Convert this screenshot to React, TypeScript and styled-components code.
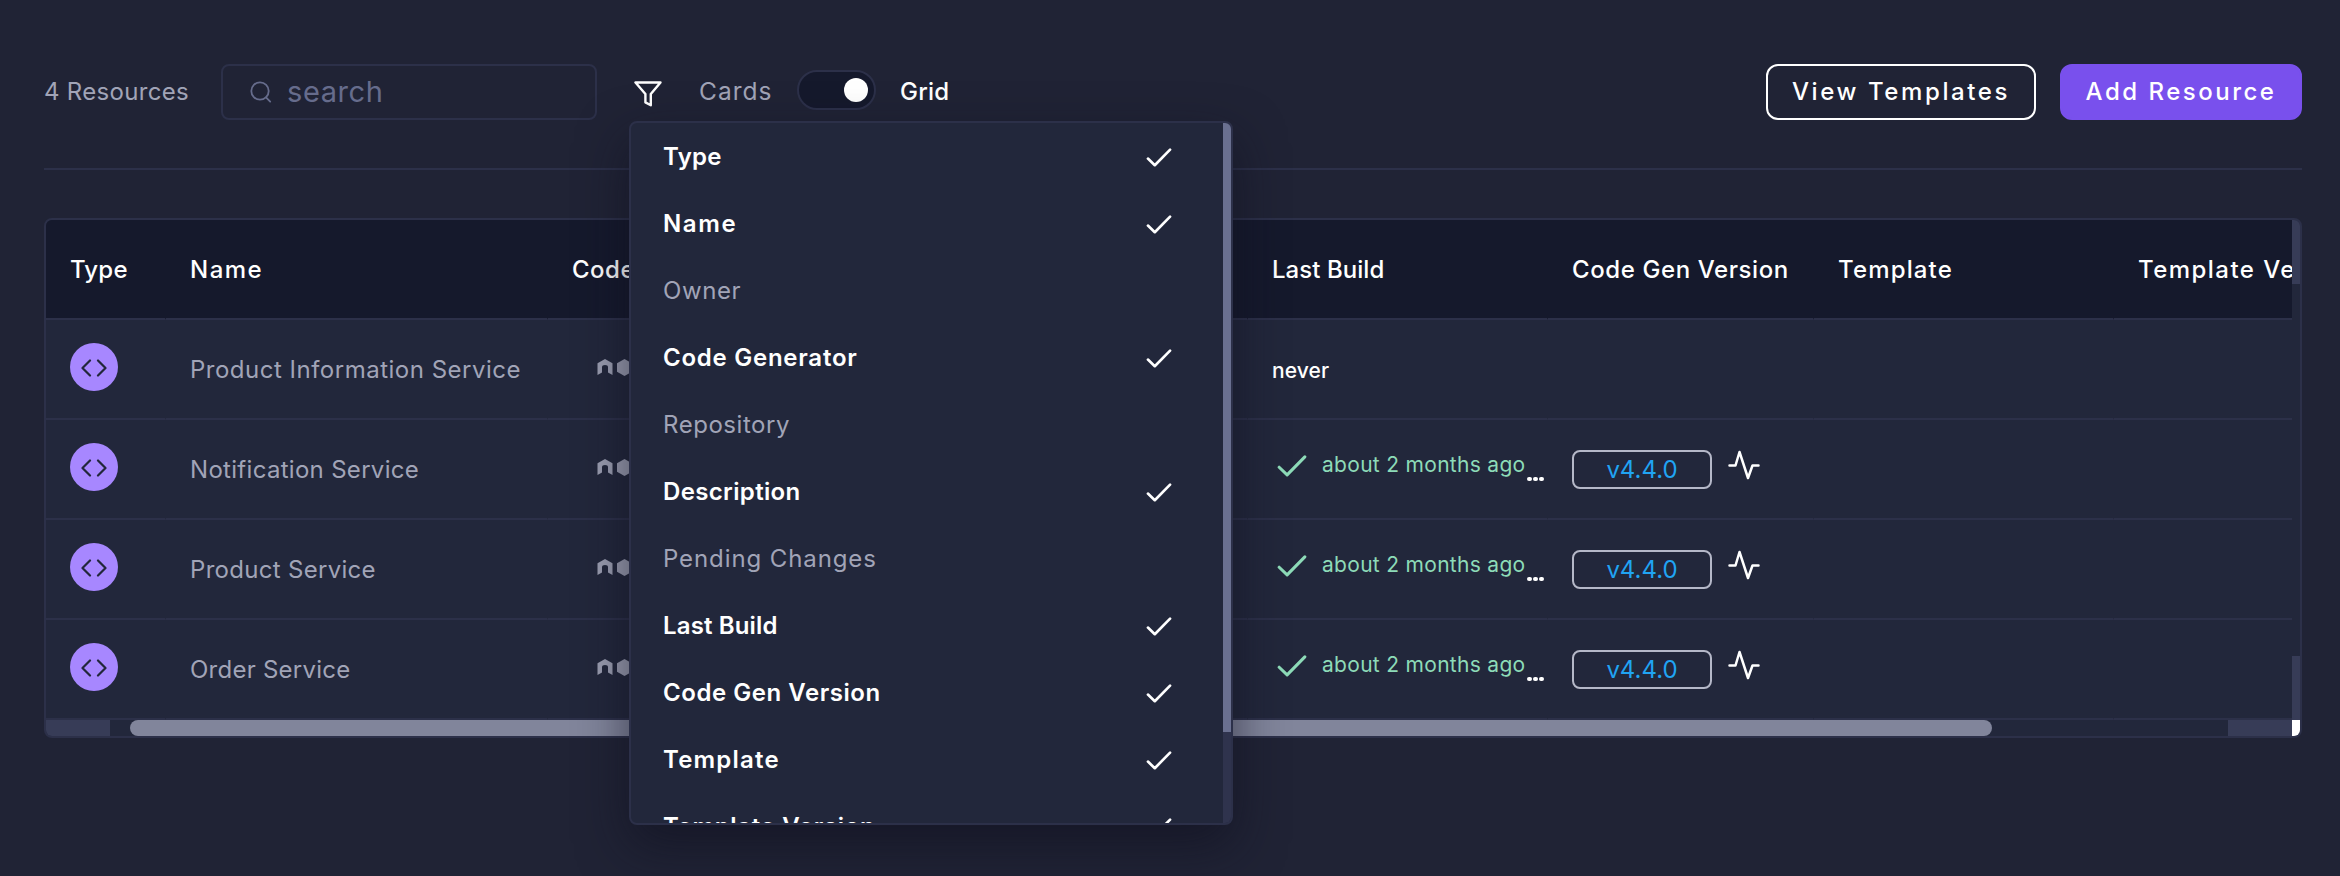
import React from "react";
import styled, { createGlobalStyle } from "styled-components";

const Global = createGlobalStyle`
  * { box-sizing: border-box; }
  body { margin: 0; background: #202335; color: #fff; font-family: Inter, sans-serif; font-size: 24px; }
  button { font: inherit; color: inherit; }
`;

const line = "#2c3049";
const muted = "#a1a4b7";

const Page = styled.main`
  position: relative;
  height: 876px;
  padding: 64px 38px 0 44px;
  overflow: hidden;
`;
const Toolbar = styled.header`
  display: flex;
  align-items: center;
  height: 106px;
  padding-bottom: 48px;
  border-bottom: 2px solid ${line};
`;
const Label = styled.span<{ $color?: string; $size?: number; $track?: number; $weight?: number }>`
  color: ${(p) => p.$color ?? "#fff"};
  font-size: ${(p) => p.$size ?? 24}px;
  letter-spacing: ${(p) => p.$track ?? 0}px;
  font-weight: ${(p) => p.$weight ?? 400};
  line-height: 1;
  white-space: nowrap;
`;
const Count = styled.div`display: flex; width: 177px; flex: none; padding-bottom: 1px;`;
const Search = styled.div`
  display: flex;
  align-items: center;
  gap: 15px;
  width: 376px;
  height: 56px;
  padding: 0 0 1px 27px;
  border: 2px solid ${line};
  border-radius: 8px;
`;
const FilterButton = styled.button`
  display: flex;
  margin: 4px 36px 0 37px;
  padding: 0;
  border: 0;
  background: none;
`;
const CardsSlot = styled.div`display: flex; width: 98px; flex: none; margin-left: 1px; padding-bottom: 1px;`;
const Toggle = styled.div`
  display: flex;
  align-items: center;
  justify-content: flex-end;
  width: 79px;
  height: 40px;
  margin: 0 24px 4px 0;
  padding-right: 6px;
  border: 2px solid ${line};
  border-radius: 20px;
  background: #15192c;
`;
const Knob = styled.span`width: 24px; height: 24px; border-radius: 50%; background: #fff;`;
const Actions = styled.div`display: flex; gap: 24px; margin-left: auto;`;
const Action = styled.button<{ $primary?: boolean; $width: number }>`
  display: flex;
  align-items: center;
  justify-content: center;
  width: ${(p) => p.$width}px;
  height: 56px;
  padding: 0 0 1px;
  border: 2px solid ${(p) => (p.$primary ? "#7950ed" : "#fff")};
  border-radius: 12px;
  background: ${(p) => (p.$primary ? "#7950ed" : "transparent")};
`;

const Table = styled.section`
  height: 520px;
  margin-top: 48px;
  border: 2px solid ${line};
  border-radius: 8px;
  background: #22273b;
  overflow: hidden;
`;
const TableBody = styled.div`display: flex; height: 500px;`;
const Rows = styled.div`width: 2246px; overflow: hidden;`;
const Row = styled.div<{ $head?: boolean }>`
  display: grid;
  grid-template-columns: 120px 382px 350px 350px 300px 266px 300px 300px;
  height: 100px;
  background: ${(p) => (p.$head ? "#15192c" : "#22273b")};
`;
const Cell = styled.div<{ $head?: boolean; $drop?: number }>`
  display: flex;
  align-items: center;
  padding: ${(p) => p.$drop ?? 0}px 0 0 24px;
  border-bottom: 2px solid ${line};
  border-right: 1px solid ${(p) => (p.$head ? "#15192c" : "#22273b")};
`;
const VTrack = styled.div`
  display: flex;
  flex-direction: column;
  justify-content: space-between;
  width: 8px;
`;
const HTrack = styled.div`display: flex; height: 16px;`;
const TrackEnd = styled.div<{ $w: number; $h: number }>`
  width: ${(p) => p.$w}px;
  height: ${(p) => p.$h}px;
  background: #373c57;
`;
const Corner = styled.div`width: 8px; height: 16px; background: #fff;`;
const HThumb = styled.div`
  width: 1862px;
  height: 16px;
  margin: 0 236px 0 20px;
  border-radius: 8px;
  background: #81859b;
`;
const Avatar = styled.div`
  display: flex;
  align-items: center;
  justify-content: center;
  width: 48px;
  height: 48px;
  margin-bottom: 4px;
  padding-top: 2px;
  border-radius: 50%;
  background: #a787ff;
`;
const Stack = styled.div`display: flex; align-items: center; gap: 4px; padding: 0 0 4px 25px;`;
const Build = styled.div`display: flex; align-items: center; padding-left: 5px;`;
const BuildCheck = styled.div`display: flex; width: 45px; margin-top: -6px;`;
const BuildText = styled.div`display: flex; width: 205px; margin-top: -10px;`;
const Dots = styled.div`display: flex; gap: 1.5px; margin-top: 20px;`;
const Dot = styled.span`width: 4.5px; height: 4.5px; border-radius: 50%; background: #fff;`;
const Badge = styled.div`
  display: flex;
  align-items: center;
  justify-content: center;
  width: 140px;
  height: 39px;
  margin-right: 16px;
  border: 2px solid #b5b8c8;
  border-radius: 8px;
`;
const Pulse = styled.div`display: flex; margin-top: -9px;`;

const Menu = styled.div`
  position: absolute;
  top: 121px;
  left: 629px;
  display: flex;
  width: 604px;
  height: 704px;
  border: 2px solid ${line};
  border-radius: 8px;
  background: #22273b;
  box-shadow: 0 20px 50px rgba(15, 15, 30, 0.6);
  overflow: hidden;
`;
const MenuList = styled.div`width: 592px; overflow: hidden;`;
const MenuItem = styled.div`
  display: flex;
  align-items: center;
  justify-content: space-between;
  height: 67px;
  padding: 0 51px 0 32px;
`;
const MenuCheck = styled.div`display: flex; margin-top: 2px;`;
const MenuTrack = styled.div`width: 8px; background: #2f334d;`;
const MenuThumb = styled.div`height: 609px; background: #6a7090;`;

const Check = ({ w, h, color }: { w: number; h: number; color: string }) => (
  <svg width={w} height={h} viewBox="0 0 24 18" fill="none" stroke={color} strokeWidth="2.5" strokeLinecap="round" strokeLinejoin="round">
    <path d="M1.5 10 8 16.3 22.5 1.5" />
  </svg>
);
const SearchIcon = () => (
  <svg width="22" height="22" viewBox="0 0 22 22" fill="none" stroke="#666c8c" strokeWidth="1.8" strokeLinecap="round">
    <circle cx="10" cy="10" r="8.7" />
    <path d="m16 16.4 4.2 4.2" />
  </svg>
);
const FilterIcon = () => (
  <svg width="28" height="26" viewBox="0 0 28 26" fill="none" stroke="#fff" strokeWidth="2.4" strokeLinejoin="round">
    <path d="M1.5 1.5h25L16.8 13v11.3l-5.4-2.9V13Z" />
  </svg>
);
const CodeIcon = () => (
  <svg width="26" height="18" viewBox="0 0 26 18" fill="none" stroke="#22273b" strokeWidth="2.2" strokeLinecap="round" strokeLinejoin="round">
    <path d="M9 1.5 1.5 9 9 16.5M17 1.5 24.5 9 17 16.5" />
  </svg>
);
const NodeIcon = () => (
  <svg width="16" height="17" viewBox="0 0 16 17" fill="#9a9db0">
    <path d="M8 0 15.5 4.3V16L11 13.5V8.2Q11 6 8 6T5 8.2V13.5L.5 16V4.3Z" />
  </svg>
);
const HexIcon = () => (
  <svg width="15" height="17" viewBox="0 0 15 17" fill="#9a9db0">
    <path d="M7.5 0 15 4.3V12.7L7.5 17 0 12.7V4.3Z" />
  </svg>
);
const PulseIcon = () => (
  <svg width="32" height="30" viewBox="0 0 32 30" fill="none" stroke="#fff" strokeWidth="2.5" strokeLinecap="round" strokeLinejoin="round">
    <path d="M1.5 15.5H7.5L11.5 2 20 28 24.5 15.5H30.5" />
  </svg>
);

const headers: [string, number][] = [
  ["Type", 0.2], ["Name", 1.5], ["Code Generator", 0.5], ["Description", 0.2],
  ["Last Build", 0.05], ["Code Gen Version", 0.6], ["Template", 1.15], ["Template Version", 1.45],
];
const resources: [string, number, boolean][] = [
  ["Product Information Service", 0.5, false],
  ["Notification Service", 0.3, true],
  ["Product Service", 0.3, true],
  ["Order Service", 0.25, true],
];
const fields: [string, number, boolean][] = [
  ["Type", 0.3, true], ["Name", 1.6, true], ["Owner", 0.6, false], ["Code Generator", 0.75, true],
  ["Repository", 0.55, false], ["Description", 0.35, true], ["Pending Changes", 0.9, false], ["Last Build", 0.15, true],
  ["Code Gen Version", 0.55, true], ["Template", 1.2, true], ["Template Version", 0.65, true],
];

export default function App() {
  return (
    <Page>
      <Global />
      <Toolbar>
        <Count><Label $color={muted} $track={0.3} $weight={430}>4 Resources</Label></Count>
        <Search><SearchIcon /><Label $color="#666c8c" $size={29} $track={0.6}>search</Label></Search>
        <FilterButton><FilterIcon /></FilterButton>
        <CardsSlot><Label $color={muted} $size={24.5} $track={1}>Cards</Label></CardsSlot>
        <Toggle><Knob /></Toggle>
        <Label $track={0.2} $weight={500}>Grid</Label>
        <Actions>
          <Action $width={270}><Label $track={2.6} $weight={450}>View Templates</Label></Action>
          <Action $width={242} $primary><Label $track={2.5} $weight={450}>Add Resource</Label></Action>
        </Actions>
      </Toolbar>
      <Table>
        <TableBody>
          <Rows>
            <Row $head>
              {headers.map(([t, s]) => <Cell key={t} $head $drop={2}><Label $track={s} $weight={500}>{t}</Label></Cell>)}
            </Row>
            {resources.map(([name, track, built]) => (
              <Row key={name}>
                <Cell><Avatar><CodeIcon /></Avatar></Cell>
                <Cell $drop={2}><Label $color={muted} $track={track} $weight={430}>{name}</Label></Cell>
                <Cell><Stack><NodeIcon /><HexIcon /></Stack></Cell>
                <Cell />
                <Cell $drop={built ? 0 : 3}>
                  {built ? (
                    <Build>
                      <BuildCheck><Check w={30} h={22} color="#8ddbb8" /></BuildCheck>
                      <BuildText><Label $color="#8ddbb8" $size={21} $track={0.3} $weight={440}>about 2 months ago</Label></BuildText>
                      <Dots><Dot /><Dot /><Dot /></Dots>
                    </Build>
                  ) : <Label $size={21} $track={0.1} $weight={450}>never</Label>}
                </Cell>
                <Cell $drop={1}>
                  {built && <><Badge><Label $color="#20a4f3">v4.4.0</Label></Badge><Pulse><PulseIcon /></Pulse></>}
                </Cell>
                <Cell />
                <Cell />
              </Row>
            ))}
          </Rows>
          <VTrack><TrackEnd $w={8} $h={64} /><TrackEnd $w={8} $h={64} /></VTrack>
        </TableBody>
        <HTrack>
          <TrackEnd $w={64} $h={16} />
          <HThumb />
          <TrackEnd $w={64} $h={16} />
          <Corner />
        </HTrack>
      </Table>
      <Menu>
        <MenuList>
          {fields.map(([t, s, on]) => (
            <MenuItem key={t}>
              <Label $color={on ? "#fff" : muted} $weight={on ? 600 : 400} $track={s}>{t}</Label>
              {on && <MenuCheck><Check w={26} h={19} color="#fff" /></MenuCheck>}
            </MenuItem>
          ))}
        </MenuList>
        <MenuTrack><MenuThumb /></MenuTrack>
      </Menu>
    </Page>
  );
}
